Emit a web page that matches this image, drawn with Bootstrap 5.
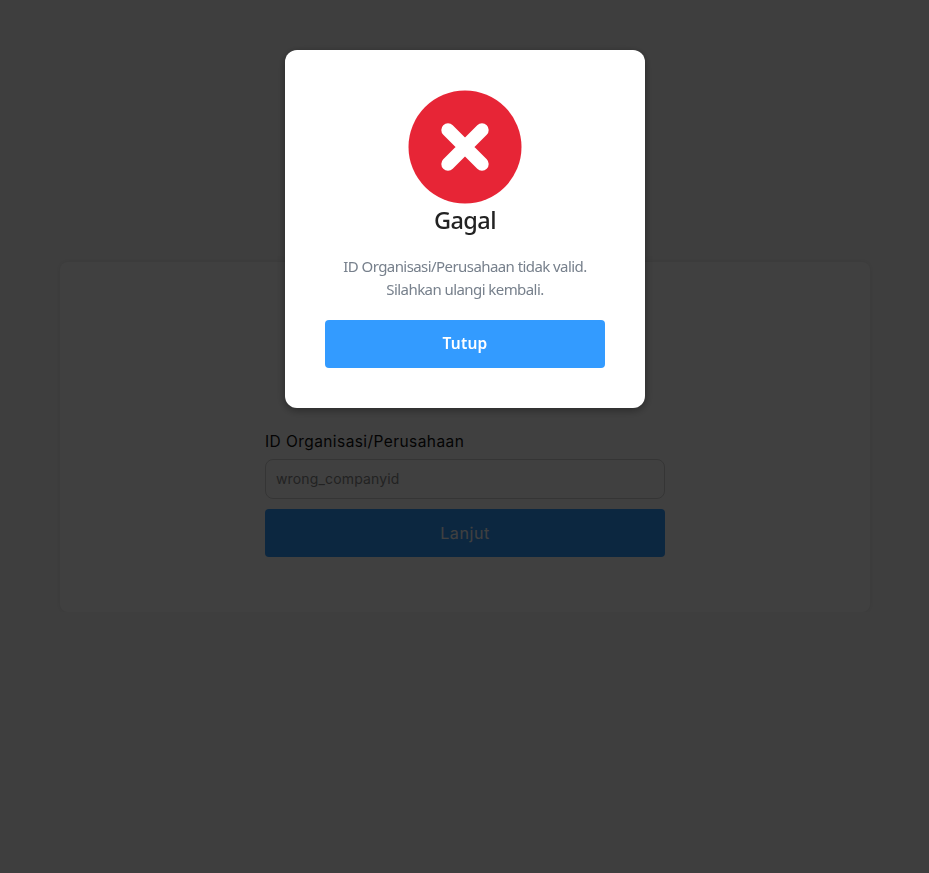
<!DOCTYPE html>
<html lang="id">
<head>
<meta charset="utf-8">
<meta name="viewport" content="width=device-width, initial-scale=1">
<title>Masuk</title>
<link href="https://cdn.jsdelivr.net/npm/bootstrap@5.3.0/dist/css/bootstrap.min.css" rel="stylesheet">
<style>
body { background: #f8f8f8; font-family: Inter, "Noto Sans", sans-serif; overflow: hidden; }
.login-page { padding: 262px 59px 0 60px; }
.login-panel { height: 350px; border-radius: 8px; box-shadow: 0 0 6px rgba(0,0,0,.1); padding-top: 168px; }
.login-form { width: 400px; }
.org-label { font-size: 15.5px; line-height: 24px; color: #111; letter-spacing: .42px; margin-bottom: 5px; }
.org-input { height: 40px; border: 1px solid #d2d2d2; border-radius: 8px; padding: 0 10px 2px; font-size: 14px; letter-spacing: .15px; color: #888; margin-bottom: 10px; }
.action-btn, .action-btn:hover { height: 48px; border: 0; border-radius: 4px; background: #339bff; color: #fff; font-size: 16px; }
.org-next { letter-spacing: .6px; }
.fail-modal { background: rgba(0,0,0,.75); font-family: "Noto Sans", "Open Sans", sans-serif; }
.fail-modal .modal-dialog { width: 360px; max-width: 360px; margin: 50px 0 0 285px; }
.fail-modal .modal-content { height: 358px; border: 0; border-radius: 12px; padding: 40px; box-shadow: 0 2px 10px rgba(0,0,0,.4); }
.fail-title { font-size: 23.5px; line-height: 33px; font-weight: 550; letter-spacing: -.6px; color: #222; margin: 0 0 18px; }
.fail-text { font-size: 15px; line-height: 23px; font-weight: 400; color: #77808c; letter-spacing: -.57px; margin: 0 0 19px; }
.fail-close { font-weight: 600; font-size: 15.5px !important; letter-spacing: .2px; }
</style>
</head>
<body>
<main class="login-page">
  <section class="login-panel bg-white">
    <form class="login-form mx-auto">
      <label class="org-label d-block" for="org"><span>ID Organisasi/Perusahaan</span></label>
      <input class="org-input form-control" id="org" type="text" value="wrong_companyid">
      <button class="action-btn org-next btn w-100" type="button"><span>Lanjut</span></button>
    </form>
  </section>
</main>
<div class="fail-modal modal d-block" tabindex="-1" role="dialog" aria-modal="true">
  <div class="modal-dialog">
    <div class="modal-content text-center">
      <svg class="d-block mx-auto" width="114" height="114" viewBox="0 0 114 114" aria-hidden="true">
        <circle cx="57" cy="57" r="56.5" fill="#e72536"/>
        <path d="M40 40 74 74M74 40 40 74" fill="none" stroke="#fff" stroke-width="13.4" stroke-linecap="round"/>
      </svg>
      <h2 class="fail-title">Gagal</h2>
      <p class="fail-text">ID Organisasi/Perusahaan tidak valid.<br>Silahkan ulangi kembali.</p>
      <button class="action-btn fail-close btn w-100" type="button">Tutup</button>
    </div>
  </div>
</div>
<script src="https://cdn.jsdelivr.net/npm/bootstrap@5.3.0/dist/js/bootstrap.bundle.min.js"></script>
</body>
</html>
